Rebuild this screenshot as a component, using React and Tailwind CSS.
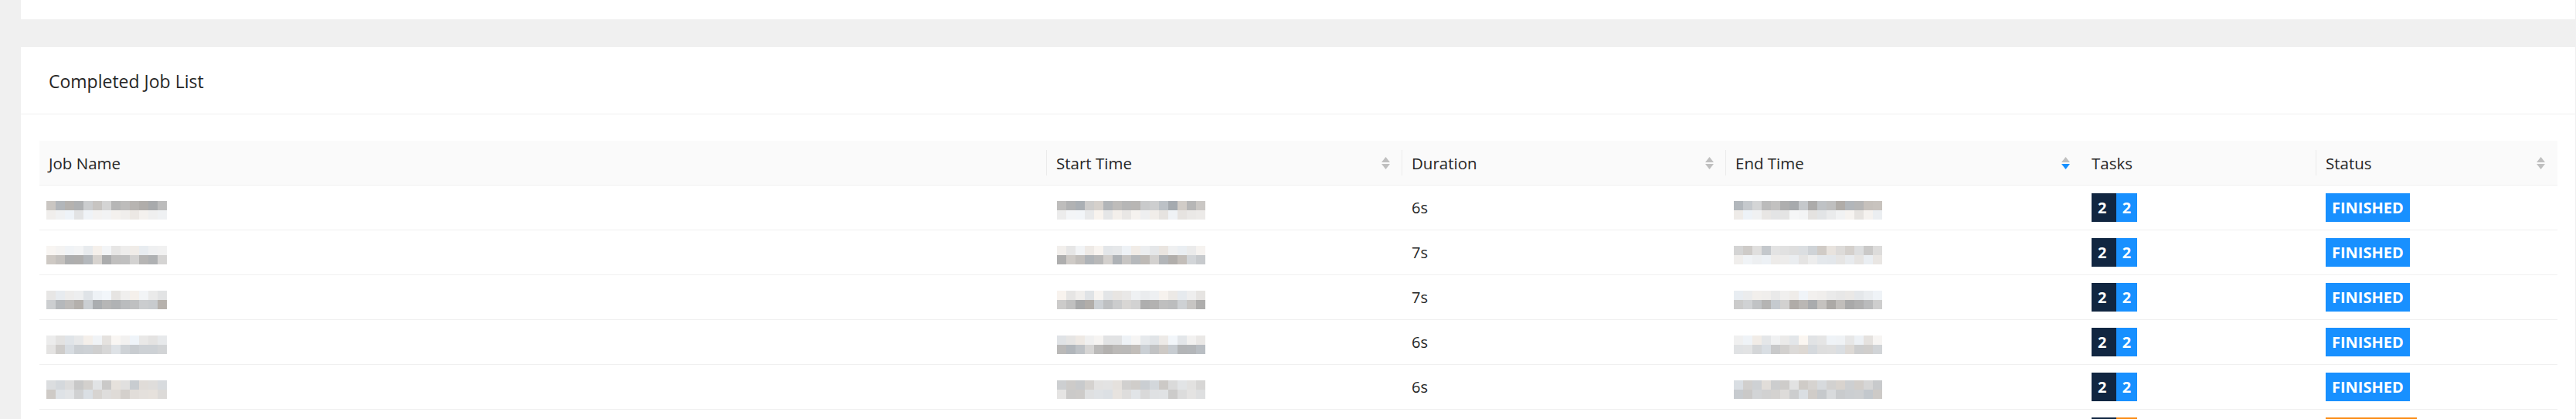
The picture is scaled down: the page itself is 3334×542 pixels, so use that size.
import React from 'react';

// pixelated placeholders, the reference hides these values
function makeRand(seed) {
  let s = seed;
  return () => {
    s = (s * 9301 + 49297) % 233280;
    return s / 233280;
  };
}

const TONES = {
  dark: [168, 214],
  mid: [200, 228],
  light: [226, 246],
};

function Mosaic({ blocks, seed, pattern }) {
  const rnd = makeRand(seed);
  return (
    <div className="flex flex-col">
      {pattern.map((tone, r) => (
        <div key={r} className="flex">
          {Array.from({ length: blocks }).map((_, i) => {
            const [lo, hi] = TONES[tone];
            const g = Math.round(lo + rnd() * (hi - lo));
            const tint = Math.round((rnd() - 0.5) * 10);
            const color = `rgb(${g + tint}, ${g}, ${g - tint})`;
            return <span key={i} className="block h-[12px] w-[12px]" style={{ backgroundColor: color }} />;
          })}
        </div>
      ))}
    </div>
  );
}

function Sorter({ active }) {
  return (
    <span className="flex flex-col items-center gap-[2px]">
      <svg width="11" height="7" viewBox="0 0 11 7">
        <path d="M5.5 0L11 7H0z" fill="#bfbfbf" />
      </svg>
      <svg width="11" height="7" viewBox="0 0 11 7">
        <path d="M0 0h11L5.5 7z" fill={active ? '#1890ff' : '#bfbfbf'} />
      </svg>
    </span>
  );
}

function HeadCell({ width, label, sort, active, sep }) {
  return (
    <div className={`${width} flex h-full items-center pl-3`}>
      <span className="flex-1 pt-[2px]">{label}</span>
      {sort && (
        <span className="mr-[15px]">
          <Sorter active={active} />
        </span>
      )}
      <span className={`h-[33px] w-px ${sep ? 'bg-[#ebebeb]' : 'bg-transparent'}`} />
    </div>
  );
}

function TaskBadge({ total, done }) {
  return (
    <div className="flex h-[37px] text-[20px] font-bold leading-none text-white">
      <span className="flex w-[32px] items-center bg-[#112641] pl-[8px]">{total}</span>
      <span className="flex w-[27px] items-center justify-center bg-[#1890ff]">{done}</span>
    </div>
  );
}

function StatusBadge({ label }) {
  return (
    <span className="flex h-[37px] items-center bg-[#1890ff] px-[8px] text-[20px] font-bold leading-none text-white">
      {label}
    </span>
  );
}

const jobs = [
  { duration: '6s', name: ['dark', 'light'], start: ['dark', 'light'], end: ['dark', 'light'] },
  { duration: '7s', name: ['light', 'dark'], start: ['light', 'dark'], end: ['mid', 'light'] },
  { duration: '7s', name: ['light', 'dark'], start: ['light', 'dark'], end: ['light', 'dark'] },
  { duration: '6s', name: ['light', 'mid'], start: ['light', 'dark'], end: ['light', 'mid'] },
  { duration: '6s', name: ['mid', 'mid'], start: ['mid', 'mid'], end: ['mid', 'mid'] },
];

export default function App() {
  return (
    <div className="h-[542px] w-[3334px] overflow-hidden bg-[#f0f0f0] pl-[27px] pr-px font-['Open_Sans',sans-serif] text-[#262626]">
      <div className="h-[25px] bg-white" />
      <div className="mt-[36px] bg-white">
        <div className="flex h-[87px] items-center border-b border-[#f0f0f0] pl-[36px] pt-[3px] text-[23px]">
          Completed Job List
        </div>
        <div className="pl-[24px] pr-[23px] pt-[34px]">
          <div className="flex h-[58px] border-b border-[#f0f0f0] bg-[#fafafa] text-[20.5px]">
            <HeadCell width="w-[1304px]" label="Job Name" sep />
            <HeadCell width="w-[460px]" label="Start Time" sort sep />
            <HeadCell width="w-[419px]" label="Duration" sort sep />
            <HeadCell width="w-[461px]" label="End Time" sort active />
            <HeadCell width="w-[303px]" label="Tasks" sep />
            <HeadCell width="w-[312px]" label="Status" sort />
          </div>
          {jobs.map((job, i) => (
            <div key={i} className="flex h-[58px] items-center border-b border-[#f0f0f0] text-[20px]">
              <div className="w-[1304px] pl-[9px] pt-[6px]">
                <Mosaic blocks={13} seed={11 + i * 7} pattern={job.name} />
              </div>
              <div className="w-[460px] pl-[13px] pt-[6px]">
                <Mosaic blocks={16} seed={31 + i * 5} pattern={job.start} />
              </div>
              <div className="w-[419px] pl-3">{job.duration}</div>
              <div className="w-[461px] pl-[10px] pt-[6px]">
                <Mosaic blocks={16} seed={53 + i * 3} pattern={job.end} />
              </div>
              <div className="w-[303px] pl-3">
                <TaskBadge total={2} done={2} />
              </div>
              <div className="flex w-[312px] pl-3">
                <StatusBadge label="FINISHED" />
              </div>
            </div>
          ))}
          {/* next row, only its badge tops show above the fold */}
          <div className="flex h-[58px] items-start pt-[10px]">
            <div className="w-[2644px]" />
            <div className="flex w-[303px] pl-3">
              <span className="h-[37px] w-[32px] bg-[#112641]" />
              <span className="h-[37px] w-[27px] bg-[#fa8c16]" />
            </div>
            <div className="w-[312px] pl-3">
              <span className="block h-[37px] w-[118px] bg-[#fa8c16]" />
            </div>
          </div>
        </div>
      </div>
    </div>
  );
}
